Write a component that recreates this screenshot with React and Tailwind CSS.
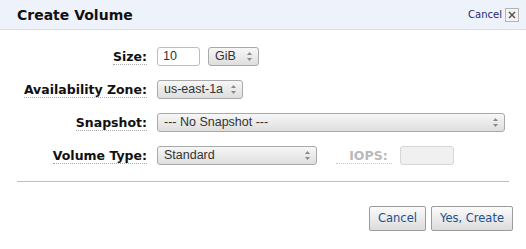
import React from 'react'

const Arrows = () => (
    <svg width="7" height="11" viewBox="0 0 7 11" className="shrink-0">
        <path d="M3.5 1 L6 4 L1 4 Z" fill="#8a8a8a" />
        <path d="M3.5 10 L6 7 L1 7 Z" fill="#8a8a8a" />
    </svg>
)

// fake select box, grey gradient with stacked arrows
const Select = ({ value, width }) => (
    <div
        className={`${width} h-[19px] flex items-center justify-between pl-[6px] pr-[5px] border border-[#a9a9a9] rounded-[3px] bg-gradient-to-b from-[#f7f7f7] to-[#dedede] text-[12.5px] text-[#333] font-['Liberation_Sans',Arial,sans-serif]`}
    >
        <span className="leading-none">{value}</span>
        <Arrows />
    </div>
)

const Label = ({ children, muted }) => (
    <div className="flex justify-end">
        <span
            className={`text-[12.5px] font-bold leading-[15px] border-b border-dotted ${muted ? 'text-[#b9b9b9] border-[#c8c8c8]' : 'text-[#111] border-[#aaa]'}`}
        >
            {children}
        </span>
    </div>
)

const App = () => {
    return (
        <div className="w-[526px] h-[249px] bg-white font-['DejaVu_Sans',Verdana,sans-serif] overflow-hidden">
            {/* header */}
            <div className="h-[30px] flex items-center justify-between pl-[17px] pr-[7px] bg-[#eef3fb] border-b border-[#d5e0ee]">
                <h1 className="text-[14px] font-bold text-[#111] mt-[1px]">Create Volume</h1>
                <div className="flex items-center gap-[3px]">
                    <span className="text-[10px] text-[#1d2a6e]">Cancel</span>
                    <span className="w-[14px] h-[14px] flex items-center justify-center border border-[#b5b5b5] bg-[#f2f2f2]">
                        <svg width="8" height="8" viewBox="0 0 8 8">
                            <path d="M1 1 L7 7 M7 1 L1 7" stroke="#555" strokeWidth="1.5" />
                        </svg>
                    </span>
                </div>
            </div>

            {/* form rows */}
            <div className="grid grid-cols-[147px_1fr] gap-x-[10px] gap-y-[14px] pt-[17px] items-center">
                <Label>Size:</Label>
                <div className="flex items-center gap-[8px] h-[19px]">
                    <div className="w-[43px] h-[19px] border border-[#bdbdbd] rounded-[3px] bg-white flex items-center pl-[5px] text-[12.5px] text-[#333] font-['Liberation_Sans',Arial,sans-serif]">
                        10
                    </div>
                    <Select value="GiB" width="w-[51px]" />
                </div>

                <Label>Availability Zone:</Label>
                <Select value="us-east-1a" width="w-[86px]" />

                <Label>Snapshot:</Label>
                <Select value="--- No Snapshot ---" width="w-[348px]" />

                <Label>Volume Type:</Label>
                <div className="flex items-center h-[19px]">
                    <Select value="Standard" width="w-[160px]" />
                    <div className="ml-[15px] w-[60px]">
                        <Label muted>&nbsp;&nbsp;&nbsp;IOPS:&nbsp;</Label>
                    </div>
                    <div className="ml-[8px] w-[54px] h-[19px] border border-[#d6d6d6] rounded-[3px] bg-[#f0f0f0]" />
                </div>
            </div>

            <div className="mx-[17px] mt-[16px] border-t border-[#bdbdbd]" />

            {/* footer buttons */}
            <div className="flex justify-end gap-[5px] pr-[13px] mt-[24px]">
                <button className="h-[25px] px-[8px] border border-[#9c9c9c] rounded-[2px] bg-gradient-to-b from-[#fbfbfb] to-[#dcdcdc] text-[11.5px] text-[#21508f]">
                    Cancel
                </button>
                <button className="h-[25px] px-[8px] border border-[#9c9c9c] rounded-[2px] bg-gradient-to-b from-[#fbfbfb] to-[#dcdcdc] text-[11.5px] text-[#21508f]">
                    Yes, Create
                </button>
            </div>
        </div>
    )
}

export default App
